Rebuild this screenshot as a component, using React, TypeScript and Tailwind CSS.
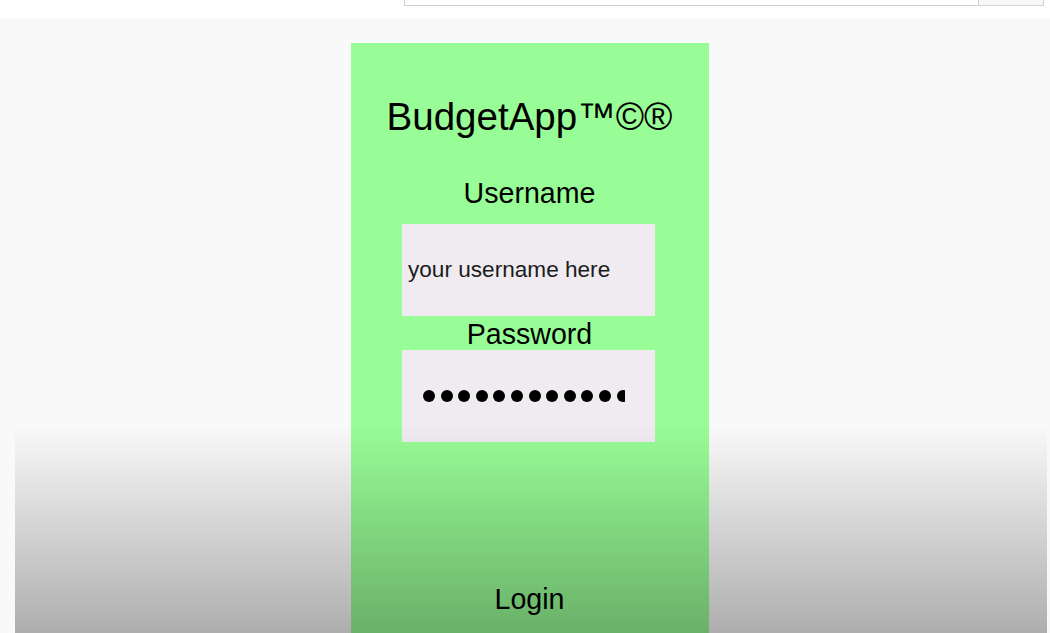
import React from "react";

export default function App() {
  const dots = Array.from({ length: 13 });
  return (
    <div
      className="relative w-[1050px] h-[633px] overflow-hidden bg-white"
      style={{ fontFamily: '"Liberation Sans", Arial, sans-serif' }}
    >
      {/* top bar */}
      <div className="h-[18px] bg-white flex">
        <div className="ml-[404px] flex h-[6px]">
          <div className="w-[575px] h-[6px] border border-t-0 border-[#cfcfcf] bg-white" />
          <div className="w-[65px] h-[6px] border border-t-0 border-l-0 border-[#d3d3d3] bg-[#f8f8f8]" />
        </div>
      </div>
      {/* video area */}
      <div className="h-[615px] bg-[#f9f9f9] pt-[25px]">
        <div className="ml-[351px] w-[358px] h-[600px] bg-[#98fd96] flex flex-col items-center text-black">
          <div className="mt-[52px] h-[44px] leading-[44px] text-[38.5px] -ml-[1px]">BudgetApp™©®</div>
          <div className="mt-[38px] h-[32px] leading-[32px] text-[28.6px] -ml-[1px]">Username</div>
          <div className="mt-[15px] w-[253px] h-[92px] bg-[#efebf0] flex items-center pl-[6px] -ml-[3px]">
            <span className="text-[22.6px] text-[#1c1c1c]">your username here</span>
          </div>
          <div className="mt-[2px] h-[32px] leading-[32px] text-[28.6px] -ml-[1px]">Password</div>
          <div className="w-[253px] h-[92px] bg-[#efebf0] flex items-center pl-[21px] -ml-[3px]">
            <div className="w-[202px] overflow-hidden flex gap-[5.6px]">
              {dots.map((_, i) => (
                <div key={i} className="w-[12px] h-[12px] shrink-0 rounded-full bg-black" />
              ))}
            </div>
          </div>
          <div className="mt-[141px] h-[32px] leading-[32px] text-[28.6px] -ml-[1px]">Login</div>
        </div>
      </div>
      {/* bottom shading overlay */}
      <div className="absolute left-[15px] top-[425px] w-[1032px] h-[208px] bg-gradient-to-b from-[rgba(0,0,0,0)] to-[rgba(0,0,0,0.3)] pointer-events-none" />
    </div>
  );
}
